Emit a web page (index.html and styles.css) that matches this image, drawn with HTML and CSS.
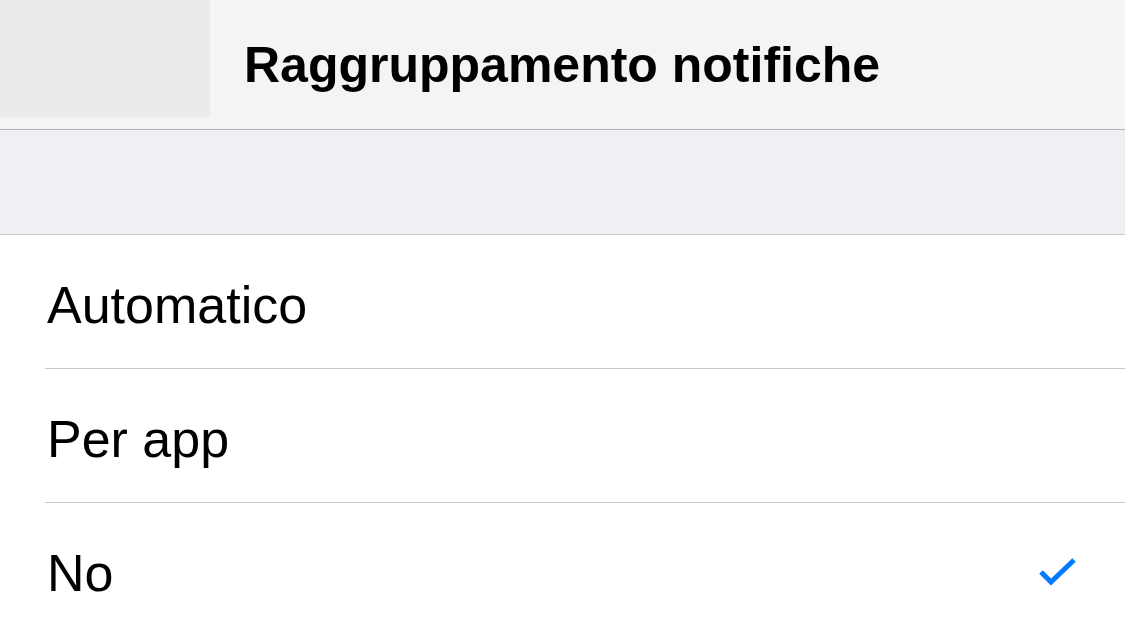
FILE: index.html
```html
<!DOCTYPE html>
<html lang="it">
<head>
  <meta charset="UTF-8">
  <meta name="viewport" content="width=device-width, initial-scale=1.0">
  <title>Raggruppamento notifiche</title>
  <link rel="stylesheet" href="styles.css">
</head>
<body>

  <header class="navbar">
    <div class="nav-back"></div>
    <h1 class="nav-title">Raggruppamento notifiche</h1>
  </header>

  <div class="section-gap"></div>

  <ul class="options">
    <li class="option">
      <span class="option-label">Automatico</span>
    </li>
    <li class="option">
      <span class="option-label">Per app</span>
    </li>
    <li class="option selected">
      <span class="option-label">No</span>
      <svg class="check" width="42" height="32" viewBox="0 0 42 32">
        <polyline points="4,15 14,25 37,3" fill="none" stroke="#007aff" stroke-width="5" stroke-linecap="butt" stroke-linejoin="miter"/>
      </svg>
    </li>
  </ul>

</body>
</html>
```

FILE: styles.css
```css
:root {
  --nav-bg: #f4f4f6;
  --group-bg: #efeff4;
  --separator: #c8c7cc;
  --tint: #007aff;
}
* {
  box-sizing: border-box;
}
body {
  margin: 0;
  background: #fff;
  color: #000;
  font-family: "Liberation Sans", Arial, sans-serif;
  overflow: hidden;
}
.navbar {
  display: flex;
  align-items: flex-start;
  height: 130px;
  background: var(--nav-bg);
  border-bottom: 1px solid #b2b2b6;
}
.nav-back {
  width: 210px;
  height: 117px;
  background: #ebebeb;
}
.nav-title {
  margin: 0 0 0 34px;
  padding-top: 36px;
  font-size: 50px;
  font-weight: 700;
  line-height: normal;
}
.section-gap {
  height: 105px;
  background: var(--group-bg);
  border-bottom: 1px solid var(--separator);
}
.options {
  list-style: none;
  margin: 0;
  padding: 0;
}
.option {
  display: flex;
  justify-content: space-between;
  align-items: flex-start;
  height: 134px;
  margin-left: 45px;
  padding-left: 2px;
  border-bottom: 1px solid var(--separator);
}
.option-label {
  padding-top: 40px;
  font-size: 52px;
  line-height: 60px;
}
.check {
  margin-top: 54px;
  margin-right: 46px;
}
```
